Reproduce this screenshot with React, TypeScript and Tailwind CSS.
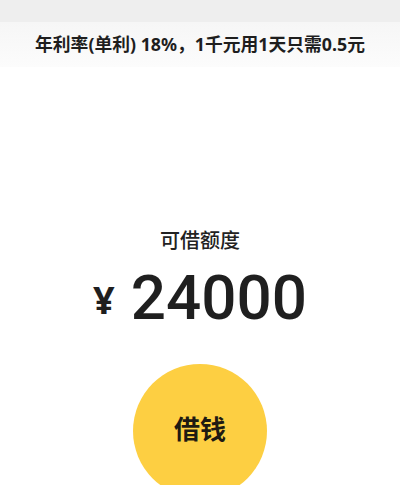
import React from "react";

export default function App() {
  return (
    <div className="w-[400px] h-[485px] bg-white overflow-hidden flex flex-col items-center" style={{ fontFamily: '"Noto Sans", "Noto Sans CJK SC", sans-serif' }}>
      <div className="w-full h-[22px] shrink-0 bg-[#eeeeee]" />
      <div className="w-full h-[45px] shrink-0 bg-gradient-to-b from-[#f6f6f6] to-[#fcfcfc] flex items-center justify-center">
        <span className="text-[17.8px] font-bold text-[#1e1e1e] leading-none">年利率(单利) 18%，1千元用1天只需0.5元</span>
      </div>
      <div className="shrink-0 mt-[160px] text-[20px] font-medium text-[#222] leading-[28px]">可借额度</div>
      <div className="shrink-0 mt-[12px] flex items-center text-[#1f1f1f] leading-none">
        <span className="text-[38px] font-bold mr-[16px] mt-[2px]">¥</span>
        <span className="text-[62px] font-medium" style={{ fontFamily: 'Roboto, sans-serif' }}>24000</span>
      </div>
      <div className="mt-[35px] w-[134px] h-[134px] shrink-0 rounded-full bg-[#fdcf42] flex items-center justify-center">
        <span className="text-[26px] font-bold text-[#1e1a12] mb-[4px]">借钱</span>
      </div>
    </div>
  );
}
